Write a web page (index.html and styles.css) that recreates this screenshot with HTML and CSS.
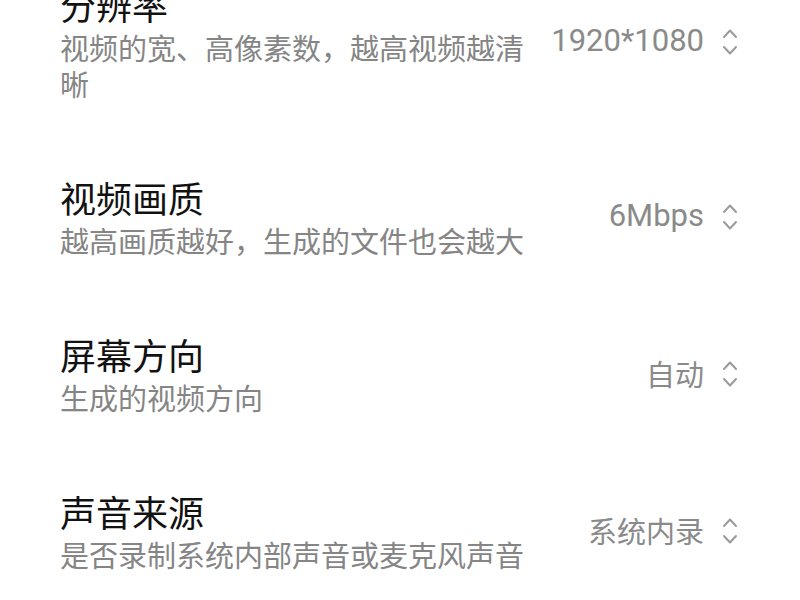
FILE: index.html
```html
<!DOCTYPE html>
<html lang="zh-CN">
<head>
<meta charset="utf-8">
<title>录制设置</title>
<link rel="stylesheet" href="styles.css">
</head>
<body>
<div class="list">
  <div class="row">
    <div class="text">
      <div class="title">分辨率</div>
      <div class="sub">视频的宽、高像素数，越高视频越清晰</div>
    </div>
    <div class="value">
      <span class="val num">1920*1080</span>
      <svg class="chev" width="16" height="30" viewBox="0 0 16 30"><path d="M2 10 L8 3.5 L14 10 M2 20 L8 26.5 L14 20" fill="none" stroke="#9a9a9a" stroke-width="2" stroke-linecap="round" stroke-linejoin="round"/></svg>
    </div>
  </div>
  <div class="row">
    <div class="text">
      <div class="title">视频画质</div>
      <div class="sub">越高画质越好，生成的文件也会越大</div>
    </div>
    <div class="value">
      <span class="val num">6Mbps</span>
      <svg class="chev" width="16" height="30" viewBox="0 0 16 30"><path d="M2 10 L8 3.5 L14 10 M2 20 L8 26.5 L14 20" fill="none" stroke="#9a9a9a" stroke-width="2" stroke-linecap="round" stroke-linejoin="round"/></svg>
    </div>
  </div>
  <div class="row">
    <div class="text">
      <div class="title">屏幕方向</div>
      <div class="sub">生成的视频方向</div>
    </div>
    <div class="value">
      <span class="val">自动</span>
      <svg class="chev" width="16" height="30" viewBox="0 0 16 30"><path d="M2 10 L8 3.5 L14 10 M2 20 L8 26.5 L14 20" fill="none" stroke="#9a9a9a" stroke-width="2" stroke-linecap="round" stroke-linejoin="round"/></svg>
    </div>
  </div>
  <div class="row">
    <div class="text">
      <div class="title">声音来源</div>
      <div class="sub">是否录制系统内部声音或麦克风声音</div>
    </div>
    <div class="value">
      <span class="val">系统内录</span>
      <svg class="chev" width="16" height="30" viewBox="0 0 16 30"><path d="M2 10 L8 3.5 L14 10 M2 20 L8 26.5 L14 20" fill="none" stroke="#9a9a9a" stroke-width="2" stroke-linecap="round" stroke-linejoin="round"/></svg>
    </div>
  </div>
</div>
</body>
</html>
```

FILE: styles.css
```css
html, body {
  margin: 0;
  padding: 0;
  background: #ffffff;
  overflow: hidden;
}
body {
  width: 800px;
  height: 600px;
  font-family: "Noto Sans CJK SC", "Noto Sans", sans-serif;
}
.list {
  display: flex;
  flex-direction: column;
  gap: 73px;
  margin-top: -19px;
  padding: 0 62px 0 60px;
}
.row {
  display: flex;
  align-items: center;
}
.text {
  flex: 1;
  margin-right: 20px;
  min-width: 0;
}
.title {
  font-size: 36px;
  line-height: 46px;
  color: #121212;
  margin-bottom: 2px;
}
.sub {
  font-size: 29px;
  line-height: 36px;
  color: #858585;
}
.value {
  display: flex;
  align-items: center;
  gap: 18px;
}
.val {
  font-size: 29px;
  line-height: 40px;
  color: #8a8a8a;
}
.val.num {
  font-family: Roboto, "Noto Sans CJK SC", sans-serif;
  font-size: 31px;
}
.chev {
  display: block;
  margin-top: 2px;
}
```
